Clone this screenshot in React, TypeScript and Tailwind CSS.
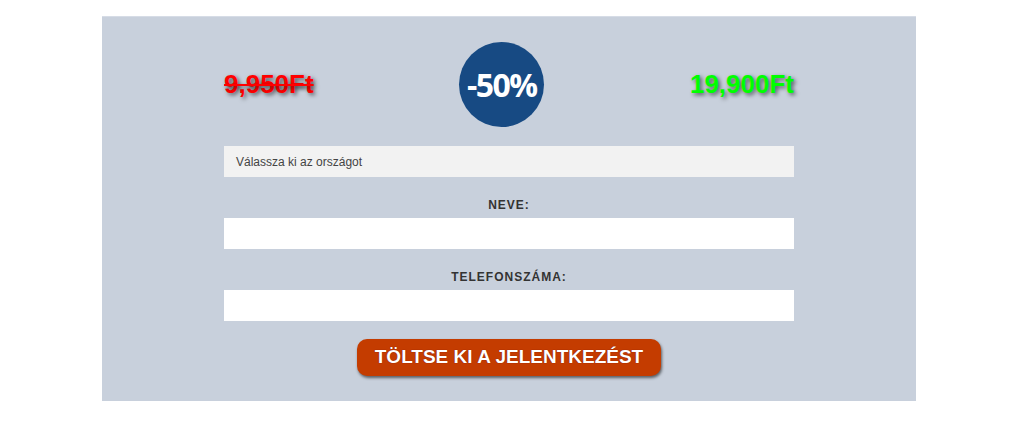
import React from 'react';

export default function App() {
    return (
        <div className="w-[1024px] h-[425px] bg-white pt-4" style={{ fontFamily: 'Arial, "Liberation Sans", sans-serif' }}>
            <div className="ml-[102px] w-[814px] bg-[#c8d0dc] border-t border-[#d6dce6] px-[122px] pt-[25px] pb-[25px]">

                {/* Price row */}
                <div className="flex items-center justify-between">
                    <span className="text-[26px] font-bold text-[#ff0000] line-through [text-shadow:2px_2px_4px_rgba(0,0,0,0.6)]">9,950Ft</span>
                    <div className="h-[85px] w-[85px] rounded-full bg-[#174a83] flex items-center justify-center">
                        <span className="text-[32px] font-bold text-white tracking-[-1.5px] font-['Open_Sans',sans-serif]">-50%</span>
                    </div>
                    <span className="text-[26px] font-bold text-[#00ff00] [text-shadow:2px_2px_4px_rgba(0,0,0,0.6)]">19,900Ft</span>
                </div>

                {/* Form */}
                <form className="mt-[19px] flex flex-col">
                    <div className="h-[31px] bg-[#f2f2f2] flex items-center pl-3 text-[12px] text-[#444]">
                        Válassza ki az országot
                    </div>

                    <label className="mt-5 mb-[5px] text-center text-[12px] leading-4 font-bold text-[#333] tracking-[1px]">NEVE:</label>
                    <input className="h-[31px] bg-white outline-none px-3 text-sm" />

                    <label className="mt-5 mb-[5px] text-center text-[12px] leading-4 font-bold text-[#333] tracking-[1px]">TELEFONSZÁMA:</label>
                    <input className="h-[31px] bg-white outline-none px-3 text-sm" />

                    <div className="mt-[18px] flex justify-center">
                        <button
                            type="button"
                            className="w-[304px] h-[37px] rounded-[10px] bg-[#c43c00] text-white text-[19px] font-bold shadow-[1px_2px_3px_rgba(0,0,0,0.55)] [text-shadow:0_0_1px_#600]"
                        >
                            TÖLTSE KI A JELENTKEZÉST
                        </button>
                    </div>
                </form>
            </div>
        </div>
    );
}
